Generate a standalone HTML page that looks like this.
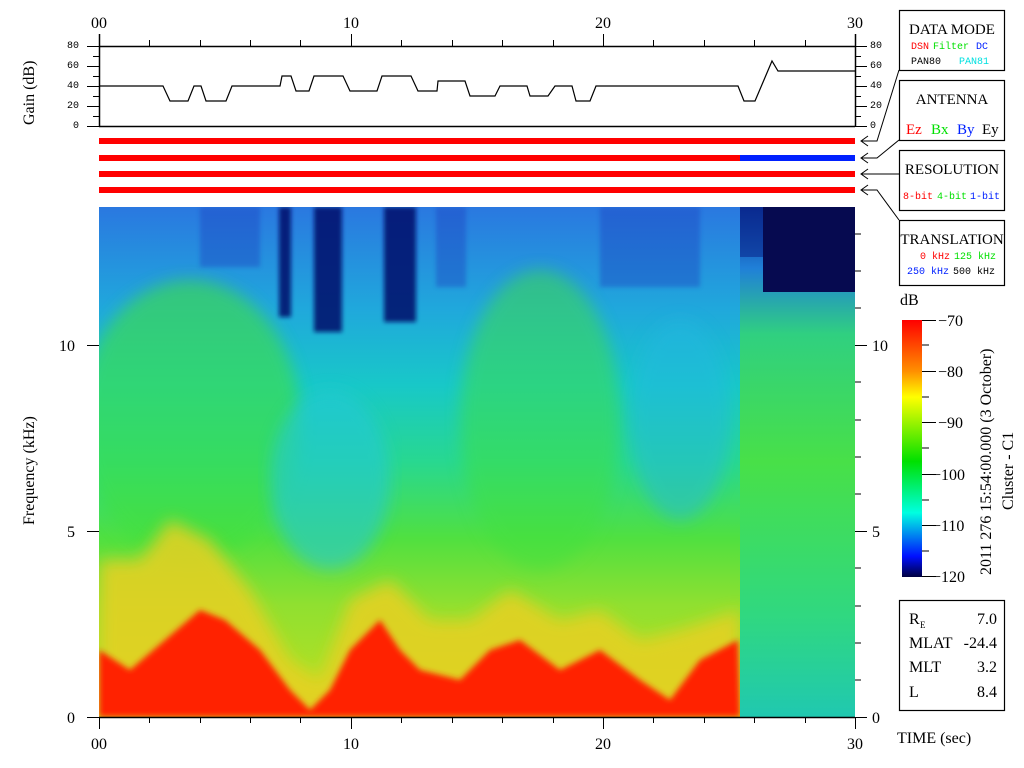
<!DOCTYPE html>
<html><head><meta charset="utf-8"><style>
html,body{margin:0;padding:0;background:#fff;}
svg{display:block;}
text{font-family:"Liberation Mono",monospace;}
.s{font-family:"Liberation Serif",serif;}
</style></head><body>
<svg width="1024" height="768" viewBox="0 0 1024 768" xmlns="http://www.w3.org/2000/svg">
<defs>
<linearGradient id="bg" x1="0" y1="0" x2="0" y2="1">
<stop offset="0" stop-color="#2a78e0"/>
<stop offset="0.2" stop-color="#20a8dc"/>
<stop offset="0.35" stop-color="#18c8c8"/>
<stop offset="0.5" stop-color="#28d890"/>
<stop offset="0.65" stop-color="#50e040"/>
<stop offset="0.78" stop-color="#90e030"/>
<stop offset="1" stop-color="#c0e020"/>
</linearGradient>
<linearGradient id="bgr" x1="0" y1="0" x2="0" y2="1">
<stop offset="0" stop-color="#0a2a90"/>
<stop offset="0.12" stop-color="#2080d8"/>
<stop offset="0.25" stop-color="#30d080"/>
<stop offset="0.5" stop-color="#48e048"/>
<stop offset="0.8" stop-color="#30d880"/>
<stop offset="1" stop-color="#20c8b0"/>
</linearGradient>
<linearGradient id="cb" x1="0" y1="0" x2="0" y2="1">
<stop offset="0" stop-color="#ff0000"/>
<stop offset="0.2" stop-color="#ff9000"/>
<stop offset="0.3" stop-color="#ffff00"/>
<stop offset="0.55" stop-color="#00e000"/>
<stop offset="0.75" stop-color="#00ffe0"/>
<stop offset="0.92" stop-color="#0010ff"/>
<stop offset="1" stop-color="#000040"/>
</linearGradient>
<filter id="bl"><feGaussianBlur stdDeviation="8"/></filter>
<filter id="bl3"><feGaussianBlur stdDeviation="3"/></filter>
<filter id="bl2"><feGaussianBlur stdDeviation="2"/></filter>
<clipPath id="sp"><rect x="99" y="207" width="641" height="510"/></clipPath>
</defs>

<rect x="99" y="207" width="641" height="510" fill="url(#bg)"/>
<g clip-path="url(#sp)">
<!-- greener left region -->
<ellipse cx="190" cy="420" rx="110" ry="140" fill="#40e040" opacity="0.6" filter="url(#bl)"/>
<ellipse cx="540" cy="420" rx="80" ry="150" fill="#40e040" opacity="0.5" filter="url(#bl)"/>
<ellipse cx="330" cy="480" rx="60" ry="90" fill="#20c8d8" opacity="0.6" filter="url(#bl)"/>
<ellipse cx="680" cy="420" rx="50" ry="100" fill="#20b8e0" opacity="0.5" filter="url(#bl)"/>
<!-- yellow/orange transition -->
<polygon filter="url(#bl)" fill="#e8d020" opacity="0.85" points="99,717 99,560 140,560 170,520 210,540 250,590 290,660 320,680 350,600 390,580 430,620 470,620 510,590 560,620 600,610 640,640 680,630 740,610 740,717"/>
<polygon filter="url(#bl3)" fill="#ff2000" points="99,717 99,650 130,670 165,640 200,610 225,620 260,650 290,690 310,710 330,690 350,650 380,620 400,650 420,670 460,680 490,650 520,640 560,670 600,650 640,680 670,700 700,660 738,640 740,717"/>
<g filter="url(#bl2)" fill="#06106a" opacity="0.85">
<rect x="279" y="207" width="12" height="110"/>
<rect x="314" y="207" width="28" height="125"/>
<rect x="384" y="207" width="32" height="115"/>
</g>
<g filter="url(#bl2)" fill="#1a40c0" opacity="0.4">
<rect x="200" y="207" width="60" height="60"/>
<rect x="436" y="207" width="30" height="80"/>
<rect x="600" y="207" width="100" height="80"/>
</g>
</g>
<rect x="740" y="207" width="115" height="510" fill="url(#bgr)"/>
<rect x="763" y="207" width="92" height="85" fill="#060a50"/>
<rect x="740" y="207" width="23" height="50" fill="#0a2a90" opacity="0.6"/>

<g stroke="#000" stroke-width="1.5" fill="none">
<line x1="99" y1="717.5" x2="855" y2="717.5"/>
<line x1="99" y1="46.5" x2="855" y2="46.5"/>
<line x1="99" y1="126.5" x2="855" y2="126.5"/>
<line x1="99.5" y1="34" x2="99.5" y2="126"/>
<line x1="855.5" y1="34" x2="855.5" y2="126"/>
</g>
<g stroke="#000" stroke-width="1">
<line x1="149.5" y1="40" x2="149.5" y2="46"/><line x1="200.5" y1="40" x2="200.5" y2="46"/><line x1="250.5" y1="40" x2="250.5" y2="46"/><line x1="300.5" y1="40" x2="300.5" y2="46"/><line x1="351.5" y1="34" x2="351.5" y2="46"/><line x1="401.5" y1="40" x2="401.5" y2="46"/><line x1="452.5" y1="40" x2="452.5" y2="46"/><line x1="502.5" y1="40" x2="502.5" y2="46"/><line x1="553.5" y1="40" x2="553.5" y2="46"/><line x1="603.5" y1="34" x2="603.5" y2="46"/><line x1="653.5" y1="40" x2="653.5" y2="46"/><line x1="704.5" y1="40" x2="704.5" y2="46"/><line x1="754.5" y1="40" x2="754.5" y2="46"/><line x1="805.5" y1="40" x2="805.5" y2="46"/>
<line x1="87" y1="46.5" x2="99" y2="46.5"/><line x1="93" y1="56.5" x2="99" y2="56.5"/><line x1="87" y1="66.5" x2="99" y2="66.5"/><line x1="93" y1="76.5" x2="99" y2="76.5"/><line x1="87" y1="86.5" x2="99" y2="86.5"/><line x1="93" y1="96.5" x2="99" y2="96.5"/><line x1="87" y1="106.5" x2="99" y2="106.5"/><line x1="93" y1="116.5" x2="99" y2="116.5"/><line x1="87" y1="126.5" x2="99" y2="126.5"/>
<line x1="855" y1="46.5" x2="867" y2="46.5"/><line x1="855" y1="56.5" x2="861" y2="56.5"/><line x1="855" y1="66.5" x2="867" y2="66.5"/><line x1="855" y1="76.5" x2="861" y2="76.5"/><line x1="855" y1="86.5" x2="867" y2="86.5"/><line x1="855" y1="96.5" x2="861" y2="96.5"/><line x1="855" y1="106.5" x2="867" y2="106.5"/><line x1="855" y1="116.5" x2="861" y2="116.5"/><line x1="855" y1="126.5" x2="867" y2="126.5"/>
<line x1="99.5" y1="717" x2="99.5" y2="729"/><line x1="351.5" y1="717" x2="351.5" y2="729"/><line x1="603.5" y1="717" x2="603.5" y2="729"/><line x1="855.5" y1="717" x2="855.5" y2="729"/>
<line x1="149.5" y1="717" x2="149.5" y2="723"/><line x1="200.5" y1="717" x2="200.5" y2="723"/><line x1="250.5" y1="717" x2="250.5" y2="723"/><line x1="300.5" y1="717" x2="300.5" y2="723"/><line x1="401.5" y1="717" x2="401.5" y2="723"/><line x1="452.5" y1="717" x2="452.5" y2="723"/><line x1="502.5" y1="717" x2="502.5" y2="723"/><line x1="553.5" y1="717" x2="553.5" y2="723"/><line x1="653.5" y1="717" x2="653.5" y2="723"/><line x1="704.5" y1="717" x2="704.5" y2="723"/><line x1="754.5" y1="717" x2="754.5" y2="723"/><line x1="805.5" y1="717" x2="805.5" y2="723"/>
<line x1="87" y1="717.5" x2="99" y2="717.5"/><line x1="87" y1="531.5" x2="99" y2="531.5"/><line x1="87" y1="345.5" x2="99" y2="345.5"/>
<line x1="855" y1="717.5" x2="867" y2="717.5"/><line x1="855" y1="531.5" x2="867" y2="531.5"/><line x1="855" y1="345.5" x2="867" y2="345.5"/>
<line x1="855" y1="680" x2="861" y2="680"/><line x1="855" y1="643" x2="861" y2="643"/><line x1="855" y1="606" x2="861" y2="606"/><line x1="855" y1="568" x2="861" y2="568"/><line x1="855" y1="494" x2="861" y2="494"/><line x1="855" y1="457" x2="861" y2="457"/><line x1="855" y1="420" x2="861" y2="420"/><line x1="855" y1="382" x2="861" y2="382"/><line x1="855" y1="308" x2="861" y2="308"/><line x1="855" y1="271" x2="861" y2="271"/><line x1="855" y1="234" x2="861" y2="234"/>
<line x1="922" y1="320.5" x2="936" y2="320.5"/><line x1="922" y1="345" x2="929" y2="345"/><line x1="922" y1="371.5" x2="936" y2="371.5"/><line x1="922" y1="397" x2="929" y2="397"/><line x1="922" y1="422.5" x2="936" y2="422.5"/><line x1="922" y1="448" x2="929" y2="448"/><line x1="922" y1="474.5" x2="936" y2="474.5"/><line x1="922" y1="500" x2="929" y2="500"/><line x1="922" y1="525.5" x2="936" y2="525.5"/><line x1="922" y1="551" x2="929" y2="551"/><line x1="922" y1="576.5" x2="936" y2="576.5"/>
</g>

<polyline fill="none" stroke="#000" stroke-width="1.2" points="99,86 163,86 170,101 188,101 194,86 201,86 206,101 226,101 232,86 280,86 282,76 291,76 296,91 309,91 314,76 343,76 350,91 377,91 382,76 411,76 418,91 437,91 438,81 465,81 470,96 495,96 500,86 527,86 530,96 548,96 555,86 572,86 576,101 590,101 596,86 738,86 744,101 755,101 772,61 778,71 855,71"/>

<rect x="99" y="138" width="756" height="6" fill="#ff0000"/>
<rect x="99" y="155" width="641" height="6" fill="#ff0000"/>
<rect x="740" y="155" width="115" height="6" fill="#0020ff"/>
<rect x="99" y="171" width="756" height="6" fill="#ff0000"/>
<rect x="99" y="187" width="756" height="6" fill="#ff0000"/>

<g stroke="#000" stroke-width="1" fill="none">
<polyline points="899,70 877,141 862,141"/><polyline points="868,136 861,141 868,146"/>
<polyline points="899,140 877,158 862,158"/><polyline points="868,153 861,158 868,163"/>
<polyline points="899,174 862,174"/><polyline points="868,169 861,174 868,179"/>
<polyline points="899,220 877,190 862,190"/><polyline points="868,185 861,190 868,195"/>
</g>

<g fill="#fff" stroke="#000" stroke-width="1.2">
<rect x="899.5" y="10.5" width="105" height="60"/>
<rect x="899.5" y="80.5" width="105" height="60"/>
<rect x="899.5" y="150.5" width="105" height="60"/>
<rect x="899.5" y="220.5" width="105" height="65"/>
<rect x="899.5" y="600.5" width="105" height="110"/>
</g>
<rect x="902" y="320" width="20" height="257" fill="url(#cb)"/>

<g class="s">
<text class="s" x="952" y="34" text-anchor="middle" font-size="15">DATA MODE</text>
<text class="s" x="952" y="104" text-anchor="middle" font-size="15">ANTENNA</text>
<text class="s" x="952" y="174" text-anchor="middle" font-size="15">RESOLUTION</text>
<text class="s" x="952" y="244" text-anchor="middle" font-size="15">TRANSLATION</text>
<text class="s" x="906" y="134" fill="#ff0000" font-size="15">Ez</text>
<text class="s" x="931" y="134" fill="#00e000" font-size="15">Bx</text>
<text class="s" x="957" y="134" fill="#0020ff" font-size="15">By</text>
<text class="s" x="982" y="134" fill="#000" font-size="15">Ey</text>
</g>
<g font-size="10">
<text x="911" y="49" fill="#ff0000">DSN</text><text x="933" y="49" fill="#00e000">Filter</text><text x="976" y="49" fill="#0020ff">DC</text>
<text x="911" y="64" fill="#000">PAN80</text><text x="959" y="64" fill="#00e0e0">PAN81</text>
<text x="903" y="199" fill="#ff0000">8-bit</text><text x="937" y="199" fill="#00e000">4-bit</text><text x="970" y="199" fill="#0020ff">1-bit</text>
<text x="920" y="259" fill="#ff0000">0 kHz</text><text x="954" y="259" fill="#00e000">125 kHz</text>
<text x="907" y="274" fill="#0020ff">250 kHz</text><text x="953" y="274" fill="#000">500 kHz</text>
<text x="67" y="48">80</text><text x="67" y="68">60</text><text x="67" y="88">40</text><text x="67" y="108">20</text><text x="73" y="128">0</text>
<text x="870" y="48">80</text><text x="870" y="68">60</text><text x="870" y="88">40</text><text x="870" y="108">20</text><text x="870" y="128">0</text>
</g>
<g class="s" font-size="16">
<text class="s" x="99" y="28" text-anchor="middle">00</text><text class="s" x="351" y="28" text-anchor="middle">10</text><text class="s" x="603" y="28" text-anchor="middle">20</text><text class="s" x="855" y="28" text-anchor="middle">30</text>
<text class="s" x="99" y="749" text-anchor="middle">00</text><text class="s" x="351" y="749" text-anchor="middle">10</text><text class="s" x="603" y="749" text-anchor="middle">20</text><text class="s" x="855" y="749" text-anchor="middle">30</text>
<text class="s" x="75" y="723" text-anchor="end">0</text><text class="s" x="75" y="537" text-anchor="end">5</text><text class="s" x="75" y="351" text-anchor="end">10</text>
<text class="s" x="872" y="723">0</text><text class="s" x="872" y="537">5</text><text class="s" x="872" y="351">10</text>
<text class="s" x="938" y="326">−70</text><text class="s" x="938" y="377">−80</text><text class="s" x="938" y="428">−90</text><text class="s" x="932" y="480">−100</text><text class="s" x="932" y="531">−110</text><text class="s" x="932" y="582">−120</text>
<text class="s" x="900" y="305">dB</text>
<text class="s" x="897" y="743">TIME (sec)</text>
<text class="s" transform="translate(34,125) rotate(-90)">Gain (dB)</text>
<text class="s" transform="translate(34,525) rotate(-90)">Frequency (kHz)</text>
<text class="s" transform="translate(991,575) rotate(-90)">2011 276 15:54:00.000 (3 October)</text>
<text class="s" transform="translate(1013,510) rotate(-90)">Cluster - C1</text>
<text class="s" x="909" y="624">R</text><text class="s" x="920" y="628" font-size="9">E</text><text class="s" x="997" y="624" text-anchor="end">7.0</text>
<text class="s" x="909" y="648">MLAT</text><text class="s" x="997" y="648" text-anchor="end">-24.4</text>
<text class="s" x="909" y="672">MLT</text><text class="s" x="997" y="672" text-anchor="end">3.2</text>
<text class="s" x="909" y="697">L</text><text class="s" x="997" y="697" text-anchor="end">8.4</text>
</g>
</svg>
</body></html>
